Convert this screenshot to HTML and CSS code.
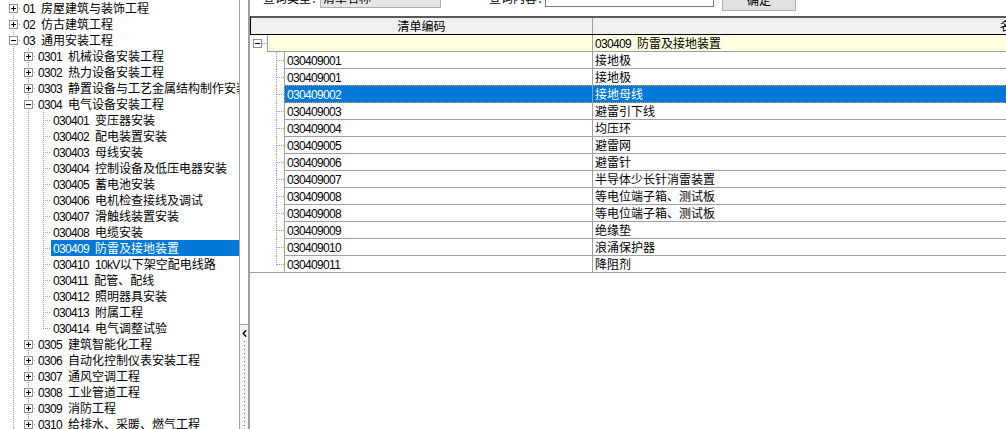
FILE: index.html
```html
<!DOCTYPE html>
<html lang="zh-CN">
<head>
<meta charset="utf-8">
<title>清单</title>
<link rel="stylesheet" href="styles.css">
</head>
<body>
<div class="app">
  <div class="tree">
    <div class="tr"><i class="c b"><i class="box p"></i></i><span class="lbl"><span class="n">01</span>房屋建筑与装饰工程</span></div>
    <div class="tr"><i class="c t b"><i class="box p"></i></i><span class="lbl"><span class="n">02</span>仿古建筑工程</span></div>
    <div class="tr"><i class="c t b"><i class="box m"></i></i><span class="lbl"><span class="n">03</span>通用安装工程</span></div>
    <div class="tr"><i class="g v"></i><i class="c t b"><i class="box p"></i></i><span class="lbl"><span class="n">0301</span>机械设备安装工程</span></div>
    <div class="tr"><i class="g v"></i><i class="c t b"><i class="box p"></i></i><span class="lbl"><span class="n">0302</span>热力设备安装工程</span></div>
    <div class="tr"><i class="g v"></i><i class="c t b"><i class="box p"></i></i><span class="lbl"><span class="n">0303</span>静置设备与工艺金属结构制作安装工程</span></div>
    <div class="tr"><i class="g v"></i><i class="c t b"><i class="box m"></i></i><span class="lbl"><span class="n">0304</span>电气设备安装工程</span></div>
    <div class="tr"><i class="g v"></i><i class="g v"></i><i class="c t b"></i><span class="lbl"><span class="n">030401</span>变压器安装</span></div>
    <div class="tr"><i class="g v"></i><i class="g v"></i><i class="c t b"></i><span class="lbl"><span class="n">030402</span>配电装置安装</span></div>
    <div class="tr"><i class="g v"></i><i class="g v"></i><i class="c t b"></i><span class="lbl"><span class="n">030403</span>母线安装</span></div>
    <div class="tr"><i class="g v"></i><i class="g v"></i><i class="c t b"></i><span class="lbl"><span class="n">030404</span>控制设备及低压电器安装</span></div>
    <div class="tr"><i class="g v"></i><i class="g v"></i><i class="c t b"></i><span class="lbl"><span class="n">030405</span>蓄电池安装</span></div>
    <div class="tr"><i class="g v"></i><i class="g v"></i><i class="c t b"></i><span class="lbl"><span class="n">030406</span>电机检查接线及调试</span></div>
    <div class="tr"><i class="g v"></i><i class="g v"></i><i class="c t b"></i><span class="lbl"><span class="n">030407</span>滑触线装置安装</span></div>
    <div class="tr"><i class="g v"></i><i class="g v"></i><i class="c t b"></i><span class="lbl"><span class="n">030408</span>电缆安装</span></div>
    <div class="tr"><i class="g v"></i><i class="g v"></i><i class="c t b"></i><span class="lbl sel"><span class="n">030409</span>防雷及接地装置</span></div>
    <div class="tr"><i class="g v"></i><i class="g v"></i><i class="c t b"></i><span class="lbl"><span class="n">030410</span><span class="n n0">10kV</span>以下架空配电线路</span></div>
    <div class="tr"><i class="g v"></i><i class="g v"></i><i class="c t b"></i><span class="lbl"><span class="n">030411</span>配管、配线</span></div>
    <div class="tr"><i class="g v"></i><i class="g v"></i><i class="c t b"></i><span class="lbl"><span class="n">030412</span>照明器具安装</span></div>
    <div class="tr"><i class="g v"></i><i class="g v"></i><i class="c t b"></i><span class="lbl"><span class="n">030413</span>附属工程</span></div>
    <div class="tr"><i class="g v"></i><i class="g v"></i><i class="c t"></i><span class="lbl"><span class="n">030414</span>电气调整试验</span></div>
    <div class="tr"><i class="g v"></i><i class="c t b"><i class="box p"></i></i><span class="lbl"><span class="n">0305</span>建筑智能化工程</span></div>
    <div class="tr"><i class="g v"></i><i class="c t b"><i class="box p"></i></i><span class="lbl"><span class="n">0306</span>自动化控制仪表安装工程</span></div>
    <div class="tr"><i class="g v"></i><i class="c t b"><i class="box p"></i></i><span class="lbl"><span class="n">0307</span>通风空调工程</span></div>
    <div class="tr"><i class="g v"></i><i class="c t b"><i class="box p"></i></i><span class="lbl"><span class="n">0308</span>工业管道工程</span></div>
    <div class="tr"><i class="g v"></i><i class="c t b"><i class="box p"></i></i><span class="lbl"><span class="n">0309</span>消防工程</span></div>
    <div class="tr"><i class="g v"></i><i class="c t b"><i class="box p"></i></i><span class="lbl"><span class="n">0310</span>给排水、采暖、燃气工程</span></div>
  </div>

  <div class="split">
    <div class="sp-top"></div>
    <div class="sp-btn">
      <svg class="sp-arrow" width="5" height="7" viewBox="0 0 5 7"><path d="M4.2 0.3 L1.2 3.5 L4.2 6.7" fill="none" stroke="#000" stroke-width="1.4"/></svg>
      <div class="sp-dots"></div>
    </div>
  </div>

  <div class="main">
    <div class="query">
      <span class="ql ql1">查询类型：</span>
      <div class="selbox"><span>清单名称</span><svg width="7" height="4" viewBox="0 0 7 4"><path d="M0.5 0.5 L3.5 3.5 L6.5 0.5" fill="none" stroke="#555"/></svg></div>
      <span class="ql ql2">查询内容：</span>
      <div class="inp"></div>
      <div class="btn">确定</div>
    </div>

    <div class="grid">
      <div class="ghead">
        <div class="h1">清单编码</div>
        <div class="h2">名称</div>
      </div>
      <div class="grow grp">
        <div class="gt-g"><i class="box m"></i></div>
        <div class="cells"><div class="gc1 w1"></div><div class="gc2"><span class="n">030409</span>防雷及接地装置</div></div>
      </div>
      <div class="grow"><div class="gt-i"></div><div class="cells"><div class="gc1"><span class="n">030409001</span></div><div class="gc2">接地极</div></div></div>
      <div class="grow"><div class="gt-i"></div><div class="cells"><div class="gc1"><span class="n">030409001</span></div><div class="gc2">接地极</div></div></div>
      <div class="grow"><div class="gt-i"></div><div class="cells sel"><div class="gc1"><span class="n">030409002</span></div><div class="gc2">接地母线</div></div></div>
      <div class="grow"><div class="gt-i"></div><div class="cells"><div class="gc1"><span class="n">030409003</span></div><div class="gc2">避雷引下线</div></div></div>
      <div class="grow"><div class="gt-i"></div><div class="cells"><div class="gc1"><span class="n">030409004</span></div><div class="gc2">均压环</div></div></div>
      <div class="grow"><div class="gt-i"></div><div class="cells"><div class="gc1"><span class="n">030409005</span></div><div class="gc2">避雷网</div></div></div>
      <div class="grow"><div class="gt-i"></div><div class="cells"><div class="gc1"><span class="n">030409006</span></div><div class="gc2">避雷针</div></div></div>
      <div class="grow"><div class="gt-i"></div><div class="cells"><div class="gc1"><span class="n">030409007</span></div><div class="gc2">半导体少长针消雷装置</div></div></div>
      <div class="grow"><div class="gt-i"></div><div class="cells"><div class="gc1"><span class="n">030409008</span></div><div class="gc2">等电位端子箱、测试板</div></div></div>
      <div class="grow"><div class="gt-i"></div><div class="cells"><div class="gc1"><span class="n">030409008</span></div><div class="gc2">等电位端子箱、测试板</div></div></div>
      <div class="grow"><div class="gt-i"></div><div class="cells"><div class="gc1"><span class="n">030409009</span></div><div class="gc2">绝缘垫</div></div></div>
      <div class="grow"><div class="gt-i"></div><div class="cells"><div class="gc1"><span class="n">030409010</span></div><div class="gc2">浪涌保护器</div></div></div>
      <div class="grow last"><div class="gt-i"></div><div class="cells"><div class="gc1"><span class="n">030409011</span></div><div class="gc2">降阻剂</div></div></div>
      <div class="gend"></div>
    </div>
  </div>
</div>
</body>
</html>
```

FILE: styles.css
```css
* { box-sizing: border-box; }
html, body { margin: 0; padding: 0; }
body {
  font-family: "Noto Sans CJK SC", "Noto Sans", sans-serif;
  font-size: 12px;
  color: #000;
  background: #fff;
  --dv: repeating-linear-gradient(to bottom, #a0a0a0 0 1px, transparent 1px 2px);
  --dh: repeating-linear-gradient(to right, #a0a0a0 0 1px, transparent 1px 2px);
}
i { font-style: normal; }

.app { display: flex; width: 1006px; height: 429px; overflow: hidden; }

/* ---------- left tree ---------- */
.tree {
  flex: none;
  width: 240px;
  height: 429px;
  border-right: 1px solid #a0a0a0;
  padding-left: 8px;
  overflow: hidden;
}
.tr { display: flex; height: 16px; line-height: 16px; white-space: nowrap; }
.g { flex: none; display: block; width: 15px; height: 16px; }
.g.v {
  background-image: var(--dv);
  background-position: 5px 0;
  background-size: 1px 16px;
  background-repeat: no-repeat;
}
.c {
  flex: none; display: block; width: 13px; height: 16px;
  background-image: var(--dh);
  background-position: 5px 8px;
  background-size: 8px 1px;
  background-repeat: no-repeat;
}
.c.t {
  background-image: var(--dh), var(--dv);
  background-position: 5px 8px, 5px 0;
  background-size: 8px 1px, 1px 8px;
}
.c.b {
  background-image: var(--dh), var(--dv);
  background-position: 5px 8px, 5px 8px;
  background-size: 8px 1px, 1px 8px;
}
.c.t.b {
  background-image: var(--dh), var(--dv);
  background-position: 5px 8px, 5px 0;
  background-size: 8px 1px, 1px 16px;
}
.box {
  display: block;
  width: 9px; height: 9px;
  margin: 4px 0 0 1px;
  border: 1px solid #919191;
}
.box.m {
  background: linear-gradient(#000, #000) center / 5px 1px no-repeat, #fff;
}
.box.p {
  background: linear-gradient(#000, #000) center / 5px 1px no-repeat,
              linear-gradient(#000, #000) center / 1px 5px no-repeat, #fff;
}
.lbl { flex: none; height: 16px; padding: 0 2px; }
.lbl.sel { flex: 1; background: #0078d7; color: #fff; }
.n {
  font-family: "Liberation Sans", Arial, sans-serif;
  font-size: 12px;
  letter-spacing: -0.67px;
  margin-right: 6px;
}
.n.n0 { margin-right: 0; }

/* ---------- splitter ---------- */
.split {
  flex: none;
  width: 10px;
  height: 429px;
  border-right: 2px solid #a0a0a0;
  display: flex;
  flex-direction: column;
}
.sp-top { flex: none; height: 324px; }
.sp-btn {
  flex: 1;
  border-top: 1px solid #a0a0a0;
  background: #f4f4f4;
  display: flex;
  flex-direction: column;
  align-items: flex-start;
  padding-top: 5px;
}
.sp-arrow { display: block; margin-left: 2px; }
.sp-dots {
  flex: 1;
  width: 1px;
  margin: 4px 0 0 4px;
  background: repeating-linear-gradient(to bottom, #2f7fc4 0 1px, transparent 1px 4px);
}

/* ---------- main ---------- */
.main { flex: 1; min-width: 0; height: 429px; overflow: hidden; }

.query {
  height: 16px;
  display: flex;
  align-items: flex-end;
  padding-left: 13px;
  white-space: nowrap;
}
.ql { flex: none; line-height: 16px; margin-bottom: 10px; }
.ql1 { width: 57px; }
.ql2 { width: 56px; margin-left: 48px; }
.selbox {
  flex: none;
  width: 121px; height: 21px;
  margin-bottom: 8px;
  border: 1px solid #adadad;
  background: #e5e5e5;
  display: flex;
  align-items: center;
  justify-content: space-between;
  padding: 0 5px 0 2px;
}
.inp {
  flex: none;
  width: 169px; height: 21px;
  margin-bottom: 9px;
  border: 1px solid #7a7a7a;
  background: #fff;
}
.btn {
  flex: none;
  width: 74px; height: 23px;
  margin: 0 0 5px 8px;
  border: 1px solid #adadad;
  background: #e1e1e1;
  display: flex;
  align-items: center;
  justify-content: center;
}

/* ---------- grid ---------- */
.grid { width: 1181px; line-height: 16px; white-space: nowrap; }
.ghead {
  display: flex;
  height: 19px;
  border-top: 2px solid #5a5a5a;
  border-bottom: 1px solid #000;
  border-left: 1px solid #000;
  background: #f0f0f0;
}
.h1 { flex: none; width: 342px; border-right: 1px solid #a0a0a0; text-align: center; }
.h2 { flex: none; width: 838px; text-align: center; }

.grow { display: flex; height: 17px; }
.grow.last { height: 16px; }
.gt-g {
  flex: none;
  width: 17px;
  background-image: var(--dh);
  background-position: 12px 8px;
  background-size: 5px 1px;
  background-repeat: no-repeat;
}
.gt-g .box { margin: 4px 0 0 3px; }
.gt-i {
  flex: none;
  width: 34px;
  background-image: var(--dh), var(--dv);
  background-position: 27px 8px, 26px 0;
  background-size: 7px 1px, 1px 17px;
  background-repeat: no-repeat;
}
.last .gt-i { background-size: 7px 1px, 1px 9px; }

.cells {
  flex: none;
  display: flex;
  height: 17px;
  border-left: 1px solid #a0a0a0;
  border-bottom: 1px solid #a0a0a0;
}
.last .cells { height: 16px; border-bottom: none; }
.gc1 {
  flex: none;
  width: 308px;
  height: 16px;
  border-right: 1px solid #a0a0a0;
  padding-left: 2px;
}
.gc1.w1 { width: 325px; }
.gc2 { flex: none; width: 838px; height: 16px; padding-left: 2px; }

.grp .cells { background: #ffffe1; }
.cells.sel {
  height: 18px;
  margin-top: -1px;
  background: #0078d7;
  color: #fff;
  border-top: 1px dotted #f0a040;
  border-left: 1px dotted #f0a040;
  border-bottom: 1px dotted #f0a040;
}
.gend { height: 1px; border-top: 1px solid #a0a0a0; }
```
